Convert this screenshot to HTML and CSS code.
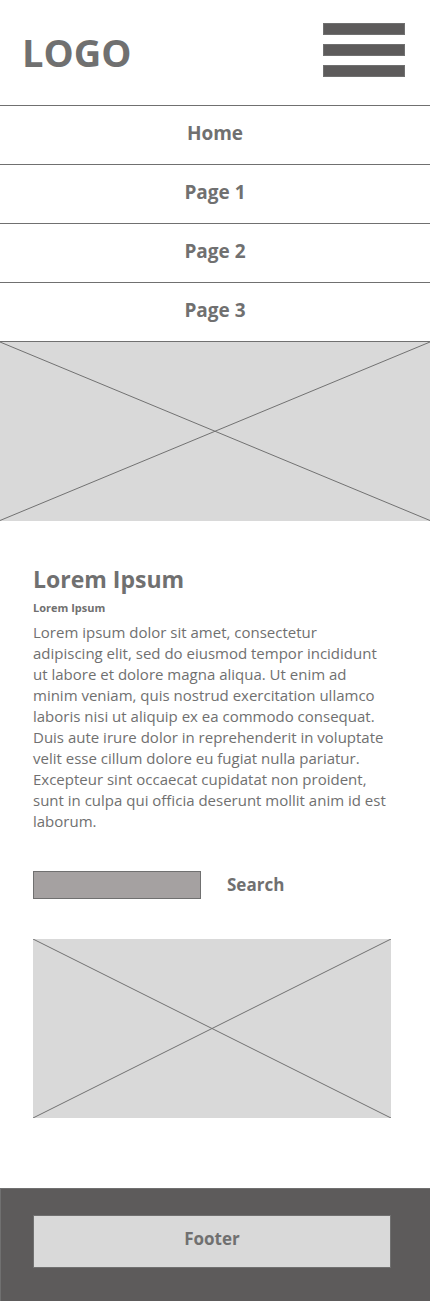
FILE: index.html
```
<!DOCTYPE html>
<html lang="en">
<head>
<meta charset="utf-8">
<meta name="viewport" content="width=device-width, initial-scale=1">
<title>Home</title>
<link rel="stylesheet" href="styles.css">
</head>
<body>
<header class="header">
  <a class="logo" href="#">LOGO</a>
  <button class="menu-button" type="button" aria-label="Menu">
    <span class="menu-bar"></span>
    <span class="menu-bar"></span>
    <span class="menu-bar"></span>
  </button>
</header>
<nav class="nav">
  <a class="nav-link" href="#" aria-current="page">Home</a>
  <a class="nav-link" href="#">Page 1</a>
  <a class="nav-link" href="#">Page 2</a>
  <a class="nav-link" href="#">Page 3</a>
</nav>
<svg class="placeholder hero" viewBox="0 0 430 180" preserveAspectRatio="none" aria-hidden="true">
  <path d="M0 0L430 179.5M0 179.5L430 0"/>
</svg>
<main class="content">
  <h1 class="title">Lorem Ipsum</h1>
  <h2 class="subtitle">Lorem Ipsum</h2>
  <p class="text">Lorem ipsum dolor sit amet, consectetur<br>
    adipiscing elit, sed do eiusmod tempor incididunt<br>
    ut labore et dolore magna aliqua. Ut enim ad<br>
    minim veniam, quis nostrud exercitation ullamco<br>
    laboris nisi ut aliquip ex ea commodo consequat.<br>
    Duis aute irure dolor in reprehenderit in voluptate<br>
    velit esse cillum dolore eu fugiat nulla pariatur.<br>
    Excepteur sint occaecat cupidatat non proident,<br>
    sunt in culpa qui officia deserunt mollit anim id est<br>
    laborum.</p>
  <form class="search">
    <input class="search-input" id="search" type="text">
    <label class="search-label" for="search">Search</label>
  </form>
  <svg class="placeholder" viewBox="0 0 358 179" preserveAspectRatio="none" aria-hidden="true">
    <path d="M0 0L358 179M0 179L358 0"/>
  </svg>
</main>
<footer class="footer">
  <div class="footer-box">Footer</div>
</footer>
</body>
</html>
```
FILE: styles.css
```
* {
  box-sizing: border-box;
}

body {
  margin: 0;
  background: #fff;
  color: #707070;
  font-family: "Segoe UI", "Open Sans", "Noto Sans", sans-serif;
}

.header {
  display: flex;
  align-items: center;
  justify-content: space-between;
  height: 105px;
  padding: 0 25px 5px 22px;
}

.logo {
  padding-top: 4px;
  color: inherit;
  font-size: 38px;
  font-weight: 700;
  text-decoration: none;
}

.menu-button {
  display: flex;
  flex-direction: column;
  gap: 9px;
  width: 82px;
  padding: 0;
  border: 0;
  background: none;
}

.menu-bar {
  height: 12px;
  border: 1px solid #707070;
  background: #5d5b5b;
}

.nav-link {
  display: block;
  height: 59px;
  padding-top: 13px;
  border-top: 1px solid #707070;
  color: inherit;
  font-size: 19px;
  font-weight: 700;
  line-height: 28px;
  text-align: center;
  text-decoration: none;
}

.placeholder {
  display: block;
  width: 100%;
  aspect-ratio: 2 / 1;
  background: #d9d9d9;
  fill: none;
  stroke: #707070;
}

.hero {
  aspect-ratio: 43 / 18;
  border-top: 1px solid #707070;
}

.content {
  padding: 42px 39px 70px 33px;
}

.title,
.subtitle,
.text {
  margin: 0;
}

.title {
  font-size: 23px;
  line-height: 32px;
}

.subtitle {
  margin-top: 4px;
  font-size: 11px;
  line-height: 18px;
}

.text {
  margin-top: 5px;
  margin-right: -6px;
  font-size: 15px;
  line-height: 21px;
}

.search {
  display: flex;
  align-items: center;
  gap: 26px;
  margin: 39px 0 40px;
}

.search-input {
  width: 168px;
  height: 28px;
  border: 1px solid #707070;
  background: #a5a1a1;
}

.search-label {
  font-size: 17px;
  font-weight: 700;
  line-height: 28px;
}

.footer {
  padding: 26px 39px 33px 32px;
  border: solid #707070;
  border-width: 1px 0 0 1px;
  background: #5d5b5b;
}

.footer-box {
  padding: 11px 0 16px;
  border: 1px solid #707070;
  background: #d9d9d9;
  font-size: 17px;
  font-weight: 700;
  line-height: 24px;
  text-align: center;
}
```
